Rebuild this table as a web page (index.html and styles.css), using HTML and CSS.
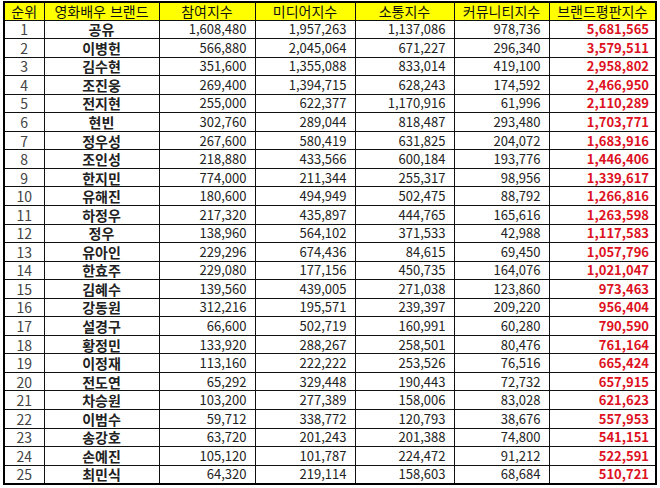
FILE: index.html
```html
<!DOCTYPE html>
<html lang="ko">
<head>
<meta charset="utf-8">
<link rel="stylesheet" href="styles.css">
</head>
<body>
<table class="rank">
<colgroup>
<col class="c-rank"><col class="c-name"><col class="c-a"><col class="c-b"><col class="c-c"><col class="c-d"><col class="c-e">
</colgroup>
<thead>
<tr><th>순위</th><th>영화배우 브랜드</th><th>참여지수</th><th>미디어지수</th><th>소통지수</th><th>커뮤니티지수</th><th>브랜드평판지수</th></tr>
</thead>
<tbody>
<tr><td class="no">1</td><td class="nm">공유</td><td>1,608,480</td><td>1,957,263</td><td>1,137,086</td><td>978,736</td><td class="tot">5,681,565</td></tr>
<tr><td class="no">2</td><td class="nm">이병헌</td><td>566,880</td><td>2,045,064</td><td>671,227</td><td>296,340</td><td class="tot">3,579,511</td></tr>
<tr><td class="no">3</td><td class="nm">김수현</td><td>351,600</td><td>1,355,088</td><td>833,014</td><td>419,100</td><td class="tot">2,958,802</td></tr>
<tr><td class="no">4</td><td class="nm">조진웅</td><td>269,400</td><td>1,394,715</td><td>628,243</td><td>174,592</td><td class="tot">2,466,950</td></tr>
<tr><td class="no">5</td><td class="nm">전지현</td><td>255,000</td><td>622,377</td><td>1,170,916</td><td>61,996</td><td class="tot">2,110,289</td></tr>
<tr><td class="no">6</td><td class="nm">현빈</td><td>302,760</td><td>289,044</td><td>818,487</td><td>293,480</td><td class="tot">1,703,771</td></tr>
<tr><td class="no">7</td><td class="nm">정우성</td><td>267,600</td><td>580,419</td><td>631,825</td><td>204,072</td><td class="tot">1,683,916</td></tr>
<tr><td class="no">8</td><td class="nm">조인성</td><td>218,880</td><td>433,566</td><td>600,184</td><td>193,776</td><td class="tot">1,446,406</td></tr>
<tr><td class="no">9</td><td class="nm">한지민</td><td>774,000</td><td>211,344</td><td>255,317</td><td>98,956</td><td class="tot">1,339,617</td></tr>
<tr><td class="no">10</td><td class="nm">유해진</td><td>180,600</td><td>494,949</td><td>502,475</td><td>88,792</td><td class="tot">1,266,816</td></tr>
<tr><td class="no">11</td><td class="nm">하정우</td><td>217,320</td><td>435,897</td><td>444,765</td><td>165,616</td><td class="tot">1,263,598</td></tr>
<tr><td class="no">12</td><td class="nm">정우</td><td>138,960</td><td>564,102</td><td>371,533</td><td>42,988</td><td class="tot">1,117,583</td></tr>
<tr><td class="no">13</td><td class="nm">유아인</td><td>229,296</td><td>674,436</td><td>84,615</td><td>69,450</td><td class="tot">1,057,796</td></tr>
<tr><td class="no">14</td><td class="nm">한효주</td><td>229,080</td><td>177,156</td><td>450,735</td><td>164,076</td><td class="tot">1,021,047</td></tr>
<tr><td class="no">15</td><td class="nm">김혜수</td><td>139,560</td><td>439,005</td><td>271,038</td><td>123,860</td><td class="tot">973,463</td></tr>
<tr><td class="no">16</td><td class="nm">강동원</td><td>312,216</td><td>195,571</td><td>239,397</td><td>209,220</td><td class="tot">956,404</td></tr>
<tr><td class="no">17</td><td class="nm">설경구</td><td>66,600</td><td>502,719</td><td>160,991</td><td>60,280</td><td class="tot">790,590</td></tr>
<tr><td class="no">18</td><td class="nm">황정민</td><td>133,920</td><td>288,267</td><td>258,501</td><td>80,476</td><td class="tot">761,164</td></tr>
<tr><td class="no">19</td><td class="nm">이정재</td><td>113,160</td><td>222,222</td><td>253,526</td><td>76,516</td><td class="tot">665,424</td></tr>
<tr><td class="no">20</td><td class="nm">전도연</td><td>65,292</td><td>329,448</td><td>190,443</td><td>72,732</td><td class="tot">657,915</td></tr>
<tr><td class="no">21</td><td class="nm">차승원</td><td>103,200</td><td>277,389</td><td>158,006</td><td>83,028</td><td class="tot">621,623</td></tr>
<tr><td class="no">22</td><td class="nm">이범수</td><td>59,712</td><td>338,772</td><td>120,793</td><td>38,676</td><td class="tot">557,953</td></tr>
<tr><td class="no">23</td><td class="nm">송강호</td><td>63,720</td><td>201,243</td><td>201,388</td><td>74,800</td><td class="tot">541,151</td></tr>
<tr><td class="no">24</td><td class="nm">손예진</td><td>105,120</td><td>101,787</td><td>224,472</td><td>91,212</td><td class="tot">522,591</td></tr>
<tr><td class="no">25</td><td class="nm">최민식</td><td>64,320</td><td>219,114</td><td>158,603</td><td>68,684</td><td class="tot">510,721</td></tr>
</tbody>
</table>
</body>
</html>
```
FILE: styles.css
```css
html, body {
  margin: 0;
  padding: 0;
  background: #ffffff;
}
body {
  padding: 1px 0 0 3px;
  font-family: "Noto Sans CJK KR", "Noto Sans", sans-serif;
  font-size: 13px;
  color: #222;
}
.rank {
  border-collapse: collapse;
  table-layout: fixed;
  width: 652px;
  border: 2px solid #000;
}
.c-rank { width: 40px; }
.c-name { width: 115px; }
.c-a { width: 96px; }
.c-b { width: 100px; }
.c-c { width: 99px; }
.c-d { width: 95px; }
.c-e { width: 107px; }
.rank thead tr { height: 18px; }
.rank tbody tr { height: 18.55px; }
.rank th, .rank td {
  border: 1px solid #111;
  padding: 0 8px 0 0;
  line-height: 16px;
  white-space: nowrap;
  overflow: hidden;
  text-align: right;
}
.rank th {
  background: #ffff00;
  font-weight: normal;
  font-size: 14px;
  text-align: center;
  padding: 0;
  color: #111;
}
.rank td.no {
  text-align: center;
  padding: 0;
  font-size: 14px;
  color: #444;
}
.rank td.nm {
  text-align: center;
  padding: 0;
  font-size: 14px;
  font-weight: bold;
  color: #222;
}
.rank td.tot {
  color: #dd1122;
  font-weight: bold;
  padding-right: 6px;
}
```
